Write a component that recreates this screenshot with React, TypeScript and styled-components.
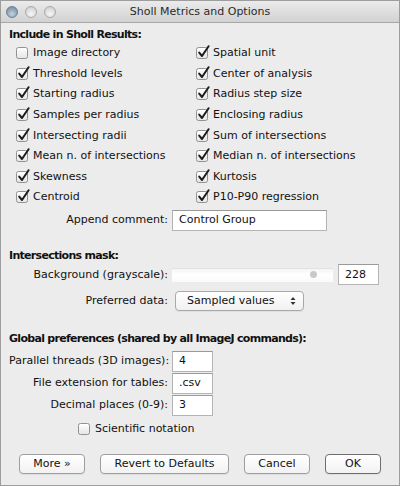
import React from "react";
import styled, { createGlobalStyle } from "styled-components";

const Global = createGlobalStyle`
  html, body { margin: 0; padding: 0; background: #ececec; }
  body { font-family: "DejaVu Sans", "Liberation Sans", sans-serif; font-size: 11px; color: #111; }
  * { box-sizing: border-box; }
`;

const Window = styled.div`
  width: 400px;
  height: 486px;
  border: 1px solid #9d9d9d;
  background: #ececec;
  display: flex;
  flex-direction: column;
`;

const TitleBar = styled.div`
  height: 22px;
  flex: none;
  background: linear-gradient(#ebebeb, #d2d2d2);
  border-bottom: 1px solid #a8a8a8;
  display: flex;
  align-items: center;
  position: relative;
  padding-left: 5px;
`;

const Lights = styled.div`
  display: flex;
  gap: 7px;
`;

const Light = styled.span<{ $active?: boolean }>`
  width: 12px;
  height: 12px;
  border-radius: 50%;
  border: 1px solid ${(p) => (p.$active ? "#6d7f92" : "#a9a9a9")};
  background: ${(p) =>
    p.$active
      ? "radial-gradient(circle at 50% 70%, #c4d4e2 0%, #8fa5b8 55%, #6f879c 100%)"
      : "radial-gradient(circle at 50% 70%, #f6f6f6 0%, #dcdcdc 60%, #c6c6c6 100%)"};
`;

const Title = styled.div`
  position: absolute;
  left: 0;
  right: 0;
  top: 0;
  bottom: 0;
  display: flex;
  align-items: center;
  justify-content: center;
  font-size: 11px;
  color: #2a2a2a;
  pointer-events: none;
`;

const Body = styled.div`
  flex: 1;
  display: flex;
  flex-direction: column;
  padding: 5px 8px 0 8px;
`;

const Heading = styled.div<{ $mt?: number }>`
  font-weight: bold;
  line-height: 14px;
  letter-spacing: -0.7px;
  margin-top: ${(p) => p.$mt ?? 0}px;
  color: #111;
`;

const CheckGrid = styled.div`
  display: grid;
  grid-template-columns: 180px 1fr;
  grid-auto-rows: 20.57px;
  padding-left: 7px;
  margin-top: 1px;
`;

const CheckRow = styled.label<{ $indent?: number }>`
  display: flex;
  align-items: center;
  gap: 5px;
  line-height: 14px;
  padding-left: ${(p) => p.$indent ?? 0}px;
`;

const Box = styled.span`
  width: 12px;
  height: 12px;
  flex: none;
  border: 1px solid #929292;
  border-radius: 2.5px;
  background: linear-gradient(#ffffff, #e6e6e6);
  box-shadow: inset 0 1px 0 #fff;
  position: relative;
`;

const Tick = styled.svg`
  position: absolute;
  left: 0px;
  top: -3px;
  width: 13px;
  height: 13px;
  overflow: visible;
`;

const ScienceRow = styled.div`
  height: 18px;
  margin-top: 4px;
  display: flex;
`;

const Check = ({ checked, children, indent }: { checked: boolean; children: React.ReactNode; indent?: number }) => (
  <CheckRow $indent={indent}>
    <Box>
      {checked && (
        <Tick viewBox="0 0 13 13">
          <path d="M2.2 7.6 L5 11 L11.6 1.2" fill="none" stroke="#1c1c1c" strokeWidth="2" strokeLinecap="round" strokeLinejoin="round" />
        </Tick>
      )}
    </Box>
    <span>{children}</span>
  </CheckRow>
);

const FieldRow = styled.div<{ $mt?: number; $h?: number }>`
  display: grid;
  grid-template-columns: 159px auto auto;
  column-gap: 4px;
  align-items: center;
  height: ${(p) => p.$h ?? 21}px;
  margin-top: ${(p) => p.$mt ?? 0}px;
`;

const Label = styled.span`
  text-align: right;
  white-space: nowrap;
  line-height: 14px;
`;

const TextField = styled.div<{ $w: number }>`
  width: ${(p) => p.$w}px;
  height: 21px;
  background: #fff;
  border: 1px solid #b4b4b4;
  border-top-color: #9a9a9a;
  display: flex;
  align-items: center;
  padding-left: 6px;
  line-height: 14px;
  color: #111;
`;

const Slider = styled.div`
  width: 161px;
  height: 14px;
  background: linear-gradient(#f4f4f4, #ffffff 40%, #fafafa);
  border-top: 1px solid #e2e2e2;
  position: relative;
`;

const Thumb = styled.span`
  position: absolute;
  left: 138px;
  top: 2px;
  width: 7px;
  height: 7px;
  border-radius: 50%;
  background: #c9c9c9;
`;

const SliderWrap = styled.div`
  display: flex;
  align-items: center;
  gap: 5px;
`;

const Select = styled.div`
  width: 129px;
  height: 20px;
  margin-left: 3px;
  border: 1px solid #a9a9a9;
  border-radius: 4px;
  background: linear-gradient(#ffffff, #f1f1f1);
  box-shadow: 0 1px 0 rgba(0, 0, 0, 0.05);
  display: flex;
  align-items: center;
  justify-content: space-between;
  padding: 0 7px 0 11px;
  line-height: 14px;
`;

const Arrows = styled.svg`
  width: 6px;
  height: 10px;
`;

const ButtonBar = styled.div`
  display: flex;
  align-items: center;
  margin-top: 16px;
  padding-left: 10px;
`;

const Button = styled.button<{ $w: number; $ml: number; $default?: boolean }>`
  width: ${(p) => p.$w}px;
  height: 20px;
  margin-left: ${(p) => p.$ml}px;
  padding: 0;
  font-family: "DejaVu Sans", "Liberation Sans", sans-serif;
  font-size: 11px;
  color: #111;
  border: 1px solid ${(p) => (p.$default ? "#6e6e6e" : "#9e9e9e")};
  border-radius: 4px;
  background: linear-gradient(#ffffff, #f2f2f2);
  box-shadow: 0 1px 0 rgba(0, 0, 0, 0.06);
`;

const left = ["Image directory", "Threshold levels", "Starting radius", "Samples per radius", "Intersecting radii", "Mean n. of intersections", "Skewness", "Centroid"];
const right = ["Spatial unit", "Center of analysis", "Radius step size", "Enclosing radius", "Sum of intersections", "Median n. of intersections", "Kurtosis", "P10-P90 regression"];

export default function App() {
  return (
    <>
      <Global />
      <Window>
        <TitleBar>
          <Lights>
            <Light $active />
            <Light />
            <Light />
          </Lights>
          <Title>Sholl Metrics and Options</Title>
        </TitleBar>
        <Body>
          <Heading>Include in Sholl Results:</Heading>
          <CheckGrid>
            {left.map((l, i) => (
              <React.Fragment key={l}>
                <Check checked={i !== 0}>{l}</Check>
                <Check checked>{right[i]}</Check>
              </React.Fragment>
            ))}
          </CheckGrid>
          <FieldRow $mt={2}>
            <Label>Append comment:</Label>
            <TextField $w={155}>Control Group</TextField>
          </FieldRow>

          <Heading $mt={18}>Intersections mask:</Heading>
          <FieldRow $mt={1} $h={22}>
            <Label>Background (grayscale):</Label>
            <SliderWrap>
              <Slider>
                <Thumb />
              </Slider>
              <TextField $w={41}>228</TextField>
            </SliderWrap>
          </FieldRow>
          <FieldRow $mt={5} $h={20}>
            <Label>Preferred data:</Label>
            <Select>
              <span>Sampled values</span>
              <Arrows viewBox="0 0 6 10">
                <path d="M0.5 4 L3 1 L5.5 4 Z M0.5 6 L3 9 L5.5 6 Z" fill="#333" />
              </Arrows>
            </Select>
          </FieldRow>

          <Heading $mt={21}>Global preferences (shared by all ImageJ commands):</Heading>
          <FieldRow $mt={5}>
            <Label>Parallel threads (3D images):</Label>
            <TextField $w={41}>4</TextField>
          </FieldRow>
          <FieldRow $mt={1}>
            <Label>File extension for tables:</Label>
            <TextField $w={41}>.csv</TextField>
          </FieldRow>
          <FieldRow $mt={1}>
            <Label>Decimal places (0-9):</Label>
            <TextField $w={41}>3</TextField>
          </FieldRow>
          <ScienceRow>
            <Check checked={false} indent={69}>Scientific notation</Check>
          </ScienceRow>

          <ButtonBar>
            <Button $w={66} $ml={0}>More »</Button>
            <Button $w={129} $ml={15}>Revert to Defaults</Button>
            <Button $w={66} $ml={15}>Cancel</Button>
            <Button $w={56} $ml={15} $default>OK</Button>
          </ButtonBar>
        </Body>
      </Window>
    </>
  );
}
